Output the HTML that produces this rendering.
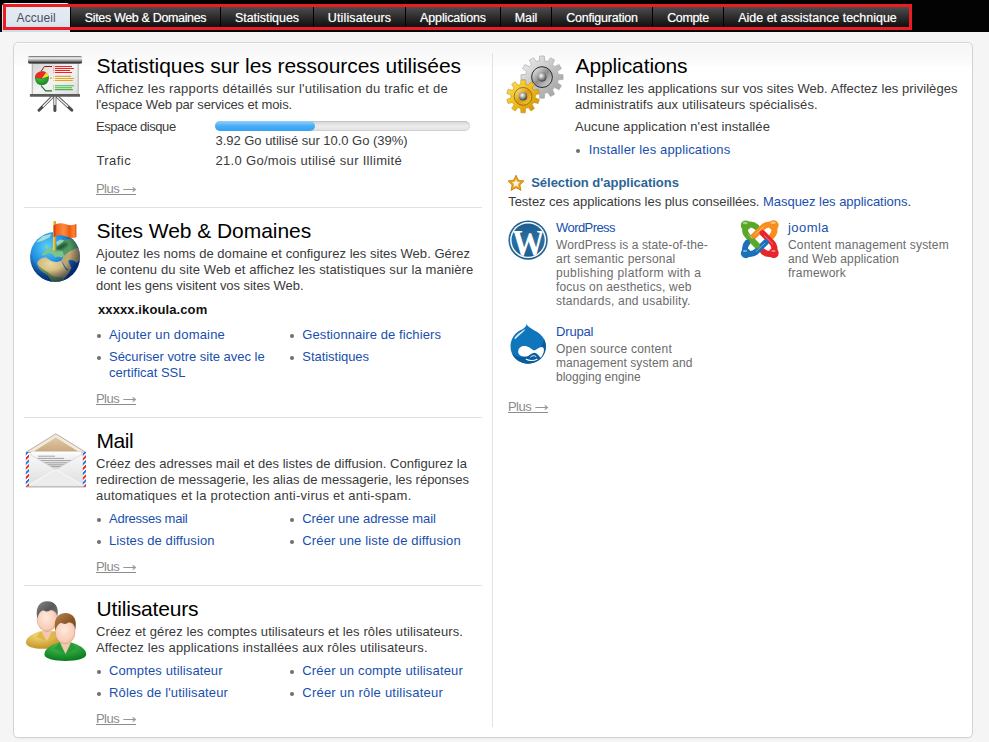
<!DOCTYPE html>
<html lang="fr">
<head>
<meta charset="utf-8">
<title>Accueil - Parallels Plesk Panel</title>
<style>
html,body{margin:0;padding:0}
body{position:relative;width:989px;height:742px;overflow:hidden;background:#f5f5f5;font-family:"Liberation Sans",sans-serif;color:#333}
#hdr{position:absolute;left:0;top:0;width:989px;height:32px;background:#030303}
a{text-decoration:none;color:inherit}
#nav{list-style:none;margin:0;padding:0}
#nav li{position:absolute;top:4px;height:26px;box-sizing:border-box;border-left:1px solid #000;background:linear-gradient(#555 0,#4a4a4a 4px,#2a2a2a 14px,#0c0c0c 24px);text-align:center;white-space:nowrap}
#nav li a{display:inline-block;font-size:12.5px;line-height:15px;margin-top:7.2px;color:#fff;text-shadow:0 0 1px rgba(255,255,255,.55)}
#nav li.on{top:3px;height:29px;border:0;border-radius:4px 4px 0 0;background:linear-gradient(#e6edf3,#dfe8ef 60%,#cddbe5)}
#nav li.on a{color:#4a4e66;text-shadow:none;font-size:12px;margin-top:8.4px}
#mark{position:absolute;left:3px;top:4px;width:903px;height:20px;border:3px solid #ed1c24}
#panel{position:absolute;left:13px;top:42px;width:958px;height:694px;border:1px solid #cfd5d9;border-radius:5px;background:linear-gradient(#fff 0,#fff 1px,#f6f6f6 1px,#fcfcfc 22px,#fff 24px);box-shadow:0 1px 1px rgba(0,0,0,.04)}
.hr{position:absolute;left:10px;width:458px;height:1px;background:#e0e3e5}
#vr{position:absolute;left:478px;top:10px;width:1px;height:674px;background:#e0e3e5}
#txt>span,#txt>a,#txt>h2,#txt>h3{position:absolute;margin:0;padding:0;white-space:nowrap;font-weight:normal}
.h{font-size:21px;line-height:24px;color:#000}
.p{font-size:13px;line-height:15px;color:#3a3a3a}
.p a{color:#184fae}
.b{font-size:13px;line-height:15px;color:#111;font-weight:bold !important}
.l{font-size:13px;line-height:15px;color:#184fae}
.m{font-size:13px;line-height:15px;letter-spacing:-.55px;color:#8c8c8c;text-decoration:none;width:40px;height:13px;border-bottom:1px solid #8c8c8c}
.m span{font-size:21.3px;line-height:0;margin-left:-3.05px;color:#969696;letter-spacing:0}
.s{font-size:13px;line-height:15px;color:#2b6596;font-weight:bold !important}
.d{font-size:12px;line-height:14px;color:#6b6b6b}
.dot{position:absolute;width:4px;height:4px;border-radius:2px;background:#6e6e6e}
.ic{position:absolute;overflow:visible}
#bar{position:absolute;left:215px;top:121px;width:255px;height:10px;border-radius:5px;background:linear-gradient(#d2d2d2,#ececec 50%,#e2e2e2);box-shadow:inset 0 0 0 1px rgba(0,0,0,.08)}
#bar i{position:absolute;left:0;top:0;width:99.5px;height:10px;border-radius:5px;background:linear-gradient(#93d3fa,#49aef4 50%,#34a1f1)}

</style>
</head>
<body>
<div id="hdr">
<ul id="nav">
<li class="on" style="left:2.4px;width:67.6px"><a href="#" style="letter-spacing:0.073px">Accueil</a></li>
<li style="left:70px;width:150px"><a href="#" style="letter-spacing:-0.340px">Sites Web &amp; Domaines</a></li>
<li style="left:220px;width:93px"><a href="#" style="letter-spacing:-0.044px">Statistiques</a></li>
<li style="left:313px;width:92px"><a href="#" style="letter-spacing:0.123px">Utilisateurs</a></li>
<li style="left:405px;width:95px"><a href="#" style="letter-spacing:-0.134px">Applications</a></li>
<li style="left:500px;width:51px"><a href="#" style="letter-spacing:-0.130px">Mail</a></li>
<li style="left:551px;width:101px"><a href="#" style="letter-spacing:-0.228px">Configuration</a></li>
<li style="left:652px;width:71px"><a href="#" style="letter-spacing:-0.347px">Compte</a></li>
<li style="left:723px;width:188px"><a href="#" style="letter-spacing:-0.023px">Aide et assistance technique</a></li>
</ul>
<div id="mark"></div>
</div>
<div id="panel">
<div class="hr" style="top:164px"></div><div class="hr" style="top:374px"></div><div class="hr" style="top:542px"></div><div id="vr"></div>
</div>
<div id="bar"><i></i></div>
<div id="dots"><i class="dot" style="left:97px;top:334px"></i><i class="dot" style="left:290px;top:334px"></i><i class="dot" style="left:97px;top:356px"></i><i class="dot" style="left:290px;top:356px"></i><i class="dot" style="left:97px;top:518px"></i><i class="dot" style="left:290px;top:518px"></i><i class="dot" style="left:97px;top:540px"></i><i class="dot" style="left:290px;top:540px"></i><i class="dot" style="left:97px;top:670px"></i><i class="dot" style="left:290px;top:670px"></i><i class="dot" style="left:97px;top:692px"></i><i class="dot" style="left:290px;top:692px"></i><i class="dot" style="left:576px;top:149px"></i></div>
<svg class="ic" style="left:20px;top:48px" width="75" height="70" viewBox="0 0 75 70">
<defs>
<linearGradient id="g1a" x1="0" y1="0" x2="0" y2="1"><stop offset="0" stop-color="#5a5a5a"/><stop offset=".25" stop-color="#fbfbfb"/><stop offset=".55" stop-color="#aaa"/><stop offset=".85" stop-color="#3a3a3a"/><stop offset="1" stop-color="#555"/></linearGradient>
<linearGradient id="g1b" x1="0" y1="0" x2="1" y2="1"><stop offset="0" stop-color="#d2d2d2"/><stop offset=".5" stop-color="#f4f4f4"/><stop offset="1" stop-color="#dedede"/></linearGradient>
<radialGradient id="g1c" cx=".4" cy=".3" r=".8"><stop offset="0" stop-color="#5fd24f"/><stop offset="1" stop-color="#0f7a1c"/></radialGradient>
<linearGradient id="g1d" x1="0" y1="0" x2="1" y2="0"><stop offset="0" stop-color="#555"/><stop offset=".5" stop-color="#eee"/><stop offset="1" stop-color="#555"/></linearGradient>
</defs>
<g stroke-linecap="round">
<path d="M32.6,48.6 L19,62.2" stroke="#4c4c4c" stroke-width="3"/><path d="M32.4,49 L23.2,58.2" stroke="#f2f2f2" stroke-width="1.5"/>
<path d="M37.2,48.6 L51.8,62.2" stroke="#4c4c4c" stroke-width="3"/><path d="M37.4,49 L47.6,58.2" stroke="#f2f2f2" stroke-width="1.5"/>
<path d="M34.9,48.6 L34.9,62.5" stroke="#4c4c4c" stroke-width="3"/><path d="M34.9,48.6 L34.9,56.5" stroke="#f2f2f2" stroke-width="1.5"/>
</g>
<rect x="12.2" y="15" width="46" height="31.4" fill="url(#g1b)" stroke="#a3a3a3" stroke-width=".9"/>
<rect x="9.9" y="46" width="50.1" height="2.8" rx=".6" fill="#5c5c5c"/>
<rect x="8" y="8" width="54.1" height="7.7" rx="1.6" fill="url(#g1a)"/>
<polyline points="21,23.4 24.4,18.5 32,18.5" fill="none" stroke="#8e1c1c" stroke-width="1"/>
<polyline points="21,37.6 25.6,42.9 32,42.9" fill="none" stroke="#1c6e33" stroke-width="1.1"/>
<rect x="30.2" y="29.4" width="1.5" height="1.5" fill="#d89a28"/>
<circle cx="21.9" cy="30.2" r="7" fill="url(#g1c)"/>
<path d="M21.9,30.6 L15,29.4 A7,6.2 0 0 1 26.2,24.6 Z" fill="#f0282a"/>
<path d="M21.9,30.6 L26.2,24.6 A7,7 0 0 1 28.7,28.6 Z" fill="#f6e02a"/>
<path d="M15,29.4 L21.9,30.8 L28.7,28.6" fill="none" stroke="#0c5a18" stroke-width=".5" opacity=".6"/>
<g stroke="#f61f1f" stroke-width="1.15"><path d="M34.9,18.5H52M34.9,20.5H53.9M34.9,22.5H50M34.9,24.5H52"/></g>
<g stroke="#e2a322" stroke-width="1.15"><path d="M34.9,28.4H51M34.9,30.5H53.9M34.9,32.5H52.8"/></g>
<g stroke="#41b845" stroke-width="1.15"><path d="M34.9,37.7H53.9M34.9,39.7H52M34.9,41.6H52.8"/></g>
<path d="M33.5,17.9V25.2" stroke="#f77" stroke-width=".8" stroke-dasharray="1.2,.9"/>
<path d="M33.5,27.8V33.1" stroke="#e8c070" stroke-width=".8" stroke-dasharray="1.2,.9"/>
<path d="M33.5,37.1V42.3" stroke="#8c8" stroke-width=".8" stroke-dasharray="1.2,.9"/>
</svg>
<svg class="ic" style="left:20px;top:212px" width="75" height="70" viewBox="0 0 75 70">
<defs>
<radialGradient id="g2a" cx=".34" cy=".3" r=".75"><stop offset="0" stop-color="#5cd0f8"/><stop offset=".4" stop-color="#2596e4"/><stop offset=".8" stop-color="#0f55b4"/><stop offset="1" stop-color="#0a3f98"/></radialGradient>
<radialGradient id="g2b" cx=".42" cy=".38" r=".62"><stop offset=".62" stop-color="#000" stop-opacity="0"/><stop offset="1" stop-color="#00164a" stop-opacity=".6"/></radialGradient>
<linearGradient id="g2c" x1="0" y1="0" x2="1" y2="0"><stop offset="0" stop-color="#c03408"/><stop offset=".12" stop-color="#f2601a"/><stop offset=".45" stop-color="#ff8c3c"/><stop offset=".7" stop-color="#ee5a12"/><stop offset=".9" stop-color="#ff8434"/><stop offset="1" stop-color="#d8440e"/></linearGradient>
<linearGradient id="g2d" x1="0" y1="0" x2="1" y2="0"><stop offset="0" stop-color="#f8dc70"/><stop offset="1" stop-color="#c8900c"/></linearGradient>
<radialGradient id="g2e" cx=".4" cy=".25" r=".8"><stop offset="0" stop-color="#ead9a0"/><stop offset=".6" stop-color="#c8b078"/><stop offset="1" stop-color="#a08c58"/></radialGradient>
<clipPath id="c2"><circle cx="35.05" cy="44.9" r="24.9"/></clipPath>
<filter id="f2" x="-10%" y="-10%" width="120%" height="120%"><feGaussianBlur stdDeviation=".35"/></filter>
<filter id="f2s" x="-30%" y="-60%" width="160%" height="220%"><feGaussianBlur stdDeviation=".9"/></filter>
</defs>
<circle cx="35.05" cy="44.9" r="24.9" fill="url(#g2a)"/>
<g clip-path="url(#c2)"><g filter="url(#f2)">
<path d="M16.32,30.38 L22.38,24.32 L31.27,21.73 L29.66,25.13 L23.19,28.52 Z" fill="#c4ecd8" opacity=".8"/>
<path d="M37.34,34.18 L44.21,28.36 L50.27,26.58 L55.53,29.57 L59.00,35.80 L53.50,37.25 L48.65,39.68 L43.64,44.12 L43.00,39.68 L37.34,37.09 Z" fill="#4f9a62"/>
<path d="M36.12,29.98 L40.57,27.39 L44.21,28.52 L40.57,32.24 L37.50,34.18 Z" fill="#9ad8b4"/>
<path d="M25.05,33.37 L26.99,32.89 L27.96,36.28 L25.86,36.61 Z" fill="#8ccc9a"/>
<path d="M21.57,41.94 L24.24,40.49 L26.18,37.66 L29.25,36.44 L32.08,35.64 L37.34,37.09 L43.00,39.68 L43.97,43.88 L41.54,45.50 L37.74,44.53 L35.07,45.50 L33.29,43.07 L31.03,41.46 L28.61,41.05 L25.37,43.07 L22.38,43.40 Z" fill="#7cc48c"/>
<path d="M41.38,48.41 L43.64,44.12 L48.65,39.68 L53.50,37.25 L57.55,35.64 L60.78,40.49 L60.78,46.95 L56.74,51.00 L53.50,48.57 L50.27,47.76 L48.25,48.97 L50.27,53.42 L51.48,56.25 L49.30,58.43 L45.82,55.85 L43.40,51.40 Z" fill="#bfa870"/>
<path d="M17.13,51.00 C17.93,48.17 22.38,45.34 25.61,45.34 C28.04,46.55 30.87,49.38 33.29,49.54 C35.72,50.35 38.95,49.78 41.38,48.41 L42.83,52.21 L44.77,56.01 L47.20,58.43 L50.43,57.30 C49.62,61.50 45.42,64.74 43.00,68.78 L37.34,70.56 L31.27,69.18 C30.06,65.55 27.64,62.72 25.21,61.34 C21.17,59.48 17.93,55.85 17.13,51.00 Z" fill="url(#g2e)"/>
<path d="M17.13,51.80 C18.34,55.85 21.57,59.48 25.61,61.50 C28.04,63.12 30.06,65.95 31.27,69.18 L37.34,70.56 L43.00,68.78 C43.80,67.16 43.00,65.55 40.57,64.74 C36.53,65.55 32.49,64.74 29.25,61.50 C25.21,58.27 20.36,56.65 17.13,51.80 Z" fill="#5e9a50" opacity=".85"/>
</g><ellipse cx="41.6" cy="34.6" rx="7.2" ry="2.3" fill="#17452a" opacity=".75" transform="rotate(-28 41.6 34.6)" filter="url(#f2s)"/></g>
<circle cx="35.05" cy="44.9" r="24.9" fill="url(#g2b)"/>
<rect x="33" y="9" width="2.9" height="29.4" rx=".6" fill="url(#g2d)"/>
<path d="M33.6,13.6 C37,10.6 42,10.8 46,12.2 C50,13.6 53,13.4 56.4,12 L56.4,25.2 C53,26.4 50,26.2 46,24.6 C42,23 37,22.6 33.6,25.6 Z" fill="url(#g2c)"/>
</svg>
<svg class="ic" style="left:20px;top:425px" width="75" height="70" viewBox="0 0 75 70">
<defs>
<linearGradient id="g3a" x1="0" y1="0" x2="0" y2="1"><stop offset="0" stop-color="#e0c8a6"/><stop offset="1" stop-color="#c9a87c"/></linearGradient>
<linearGradient id="g3b" x1="0" y1="0" x2="0" y2="1"><stop offset="0" stop-color="#fff"/><stop offset="1" stop-color="#cfcfcf"/></linearGradient>
<linearGradient id="g3c" x1="0" y1="0" x2="0" y2="1"><stop offset="0" stop-color="#fafafa"/><stop offset="1" stop-color="#dedede"/></linearGradient>
<pattern id="p3" width="4" height="9.6" patternUnits="userSpaceOnUse" patternTransform="skewY(-45)"><rect width="4" height="9.6" fill="#fff"/><rect width="4" height="2.6" fill="#e8261c"/><rect y="4.8" width="4" height="2.6" fill="#1a72e0"/></pattern>
</defs>
<path d="M5.8,27.4 L35.8,8.8 L66,27.4 Z" fill="#f2e9dc" stroke="#9c8f80" stroke-width=".7" stroke-linejoin="round"/>
<path d="M13,27 L35.8,12.6 L59,27 Z" fill="url(#g3a)"/>
<rect x="11" y="26.4" width="50.6" height="22" fill="url(#g3b)" stroke="#c8c8c8" stroke-width=".4"/>
<g stroke="#8a8a8a" stroke-width="1" opacity=".75"><path d="M18,31.2H35M17.5,33.4H44M19.5,35.6H52M21,37.8H50M24,39.8H46M28,41.6H42"/></g>
<path d="M5.8,27 L35.8,44.6 L66,27 L66,61.8 L5.8,61.8 Z" fill="url(#g3c)"/>
<path d="M5.8,61.8 L35.8,44.6 L66,61.8" fill="#ececec" stroke="#fff" stroke-width=".8"/>
<path d="M5.8,27 L35.8,44.6 L66,27" fill="none" stroke="#cfcfcf" stroke-width=".6"/>
<rect x="5.8" y="27" width="3.2" height="34.8" fill="url(#p3)"/>
<rect x="62.8" y="27" width="3.2" height="34.8" fill="url(#p3)"/>
<path d="M5.8,61.9H66" stroke="#8f8f8f" stroke-width=".8"/>
</svg>
<svg class="ic" style="left:20px;top:595px" width="75" height="70" viewBox="0 0 75 70">
<defs>
<radialGradient id="g4a" cx=".45" cy=".4" r=".7"><stop offset="0" stop-color="#ffe9de"/><stop offset=".7" stop-color="#f9cdb6"/><stop offset="1" stop-color="#e9a888"/></radialGradient>
<radialGradient id="g4b" cx=".4" cy=".25" r=".8"><stop offset="0" stop-color="#f6dc78"/><stop offset="1" stop-color="#c08e22"/></radialGradient>
<radialGradient id="g4c" cx=".45" cy=".2" r=".8"><stop offset="0" stop-color="#4cc458"/><stop offset="1" stop-color="#0a7a1e"/></radialGradient>
<linearGradient id="g4d" x1="0" y1="0" x2="1" y2="1"><stop offset="0" stop-color="#8a8a8a"/><stop offset=".5" stop-color="#5a5a5a"/><stop offset="1" stop-color="#777"/></linearGradient>
<linearGradient id="g4e" x1="0" y1="0" x2="1" y2="1"><stop offset="0" stop-color="#b98850"/><stop offset=".6" stop-color="#8a5426"/><stop offset="1" stop-color="#6e3e18"/></linearGradient>
</defs>
<path d="M6,47.5 C6,42 13,38.5 20,36.2 L34,36.2 C38,37.6 40,39 40,41 L40,50 C36,53 30,53.8 22.9,53.8 C13,53.8 6,51.5 6,47.5 Z" fill="url(#g4b)"/>
<path d="M22,36 L27,46 L32,36 Z" fill="#f4c8ae"/>
<path d="M16,42 L21,36.5 L26.5,46.5 L21,44 Z M38,42 L33,36.5 L27.5,46.5 L33,44 Z" fill="#e0b84a"/>
<ellipse cx="27" cy="24.6" rx="9.8" ry="11.8" fill="url(#g4a)" stroke="#c8927a" stroke-width=".5"/>
<path d="M17.4,23.5 C15,13 19,6.4 27,6.2 C35,6 39.6,12 37.2,22 C36.4,17.5 34,15 30,15.4 C27.6,17.4 25,16.2 23,15.2 C20,16.6 18.2,19 17.4,23.5 Z" fill="url(#g4d)"/>
<path d="M24.4,59.5 C24.4,53.5 32,50 39,47.6 L51.6,47.6 C58.6,50 66.2,53.5 66.2,59.5 C66.2,63.6 57,65.9 45.3,65.9 C33.6,65.9 24.4,63.6 24.4,59.5 Z" fill="url(#g4c)"/>
<path d="M40,47 L45.5,59 L51,47 Z" fill="#f4c8ae"/>
<path d="M34,53.5 L39.5,47.5 L45,59.5 L39,56 Z M57,53.5 L51.5,47.5 L46,59.5 L52,56 Z" fill="#2a9a36"/>
<ellipse cx="45.1" cy="37" rx="9.9" ry="11.8" fill="url(#g4a)" stroke="#c8927a" stroke-width=".5"/>
<path d="M35.4,36 C33,25.5 37,18.2 45,18 C53,17.8 57.8,24 55.2,35 C54.6,30 52.6,27.4 48.4,27.6 C46,29.8 43,28.8 41,27.8 C38,29 36.2,31.6 35.4,36 Z" fill="url(#g4e)"/>
</svg>
<svg class="ic" style="left:500px;top:45px" width="75" height="70" viewBox="0 0 75 70">
<defs>
<linearGradient id="g5a" x1="0" y1="0" x2="1" y2="1"><stop offset="0" stop-color="#f4f4f4"/><stop offset=".5" stop-color="#c4c4c4"/><stop offset="1" stop-color="#9a9a9a"/></linearGradient>
<linearGradient id="g5b" x1="0" y1="0" x2="1" y2="1"><stop offset="0" stop-color="#fbe45a"/><stop offset=".5" stop-color="#f0bc18"/><stop offset="1" stop-color="#c88a08"/></linearGradient>
<radialGradient id="g5c" cx=".4" cy=".35" r=".7"><stop offset="0" stop-color="#fff"/><stop offset=".5" stop-color="#999"/><stop offset="1" stop-color="#333"/></radialGradient>
<linearGradient id="g5d" x1="0" y1="0" x2="1" y2="1"><stop offset="0" stop-color="#fdfdfd"/><stop offset=".5" stop-color="#8c8c8c"/><stop offset="1" stop-color="#e8e8e8"/></linearGradient>
<linearGradient id="g5e" x1="0" y1="0" x2="1" y2="1"><stop offset="0" stop-color="#fff2a0"/><stop offset=".5" stop-color="#d89c10"/><stop offset="1" stop-color="#f6d040"/></linearGradient>
</defs>
<path d="M58.27,29.35 L63.07,29.77 L63.07,34.43 L58.27,34.85 L57.47,37.85 L61.41,40.62 L59.09,44.65 L54.71,42.62 L52.52,44.81 L54.55,49.19 L50.52,51.51 L47.75,47.57 L44.75,48.37 L44.33,53.17 L39.67,53.17 L39.25,48.37 L36.25,47.57 L33.48,51.51 L29.45,49.19 L31.48,44.81 L29.29,42.62 L24.91,44.65 L22.59,40.62 L26.53,37.85 L25.73,34.85 L20.93,34.43 L20.93,29.77 L25.73,29.35 L26.53,26.35 L22.59,23.58 L24.91,19.55 L29.29,21.58 L31.48,19.39 L29.45,15.01 L33.48,12.69 L36.25,16.63 L39.25,15.83 L39.67,11.03 L44.33,11.03 L44.75,15.83 L47.75,16.63 L50.52,12.69 L54.55,15.01 L52.52,19.39 L54.71,21.58 L59.09,19.55 L61.41,23.58 L57.47,26.35Z" fill="url(#g5a)" stroke="#a2a2a2" stroke-width=".6" stroke-linejoin="round"/>
<circle cx="42" cy="32.1" r="10.4" fill="url(#g5d)" stroke="#2a2a2a" stroke-width="1"/>
<circle cx="42" cy="32.1" r="4.6" fill="url(#g5c)"/>
<path d="M33.80,45.34 L38.08,44.24 L39.43,48.39 L35.32,50.01 L35.32,52.79 L39.43,54.41 L38.08,58.56 L33.80,57.46 L32.17,59.71 L34.54,63.43 L31.01,66.00 L28.20,62.59 L25.56,63.45 L25.28,67.86 L20.92,67.86 L20.64,63.45 L18.00,62.59 L15.19,66.00 L11.66,63.43 L14.03,59.71 L12.40,57.46 L8.12,58.56 L6.77,54.41 L10.88,52.79 L10.88,50.01 L6.77,48.39 L8.12,44.24 L12.40,45.34 L14.03,43.09 L11.66,39.37 L15.19,36.80 L18.00,40.21 L20.64,39.35 L20.92,34.94 L25.28,34.94 L25.56,39.35 L28.20,40.21 L31.01,36.80 L34.54,39.37 L32.17,43.09Z" fill="url(#g5b)" stroke="#b88408" stroke-width=".5" stroke-linejoin="round"/>
<circle cx="23.1" cy="51.4" r="8.9" fill="url(#g5e)" stroke="#8a5a08" stroke-width=".8"/>
<circle cx="23.1" cy="51.4" r="4.1" fill="url(#g5c)"/>
</svg>
<svg class="ic" style="left:507px;top:174px" width="18" height="18" viewBox="0 0 18 18"><polygon points="9.00,1.20 11.41,6.28 16.99,7.00 12.90,10.87 13.94,16.40 9.00,13.70 4.06,16.40 5.10,10.87 1.01,7.00 6.59,6.28" fill="#eaa21a" stroke="#c27c08" stroke-width=".8" stroke-linejoin="round"/><polygon points="9.00,5.60 10.12,7.96 12.71,8.29 10.81,10.09 11.29,12.66 9.00,11.40 6.71,12.66 7.19,10.09 5.29,8.29 7.88,7.96" fill="#f4f4f4" stroke="#fbe2a8" stroke-width=".6"/></svg>
<svg class="ic" style="left:508px;top:219px" width="42" height="42" viewBox="0 0 42 42">
<defs><linearGradient id="g7" x1="0" y1="0" x2="0" y2="1"><stop offset="0" stop-color="#1d5c8e"/><stop offset=".5" stop-color="#2a6fa3"/><stop offset="1" stop-color="#1e5d8f"/></linearGradient>
<clipPath id="c7"><circle cx="20.1" cy="21.1" r="16.6"/></clipPath></defs>
<circle cx="20.1" cy="21.1" r="19.7" fill="url(#g7)"/>
<circle cx="20.1" cy="21.1" r="18" fill="#fff"/>
<circle cx="20.1" cy="21.1" r="16.6" fill="url(#g7)"/>
<g clip-path="url(#c7)"><text x="20.3" y="37.1" text-anchor="middle" font-family="'Liberation Serif',serif" font-size="38.6" font-weight="bold" fill="#fff" textLength="32.5" lengthAdjust="spacingAndGlyphs">W</text></g>
</svg>
<svg class="ic" style="left:730px;top:210px" width="60" height="60" viewBox="0 0 60 60">
<g fill="none" stroke-width="6" stroke-linecap="round" stroke-linejoin="round"><path d="M15.80,15.40 C19.60,13.90 23.60,14.50 26.40,17.00" stroke="#5aa72a"/><path d="M15.80,15.40 C14.40,19.60 14.90,23.20 17.70,26.00 L26.90,35.40" stroke="#5aa72a"/><path d="M43.60,15.30 C45.10,19.10 44.50,23.10 42.00,25.90" stroke="#f78f1e"/><path d="M43.60,15.30 C39.40,13.90 35.80,14.40 33.00,17.20 L23.60,26.40" stroke="#f78f1e"/><path d="M43.70,43.10 C39.90,44.60 35.90,44.00 33.10,41.50" stroke="#e8252a"/><path d="M43.70,43.10 C45.10,38.90 44.60,35.30 41.80,32.50 L32.60,23.10" stroke="#e8252a"/><path d="M15.90,43.20 C14.40,39.40 15.00,35.40 17.50,32.60" stroke="#1b70b8"/><path d="M15.90,43.20 C20.10,44.60 23.70,44.10 26.50,41.30 L35.90,32.10" stroke="#1b70b8"/><path d="M22.5,30.9 L26.9,35.4" stroke="#5aa72a"/></g>
<circle cx="15.80" cy="15.40" r="5" fill="#5aa72a"/><circle cx="43.60" cy="15.30" r="5" fill="#f78f1e"/><circle cx="43.70" cy="43.10" r="5" fill="#e8252a"/><circle cx="15.90" cy="43.20" r="5" fill="#1b70b8"/><g fill="#fff" opacity=".45"><ellipse cx="15.2" cy="13" rx="2.6" ry="1.3"/><ellipse cx="43.2" cy="12.8" rx="2.6" ry="1.3"/><ellipse cx="15" cy="41" rx="2.2" ry="1"/><ellipse cx="43.4" cy="41" rx="2.2" ry="1"/></g>
<g fill="none" stroke="#fff" stroke-width=".7" opacity=".6" stroke-linecap="round"><path d="M33.5,16.8 L25,24.6"/><path d="M42.6,34 L34.4,25.8"/><path d="M26,41.6 L34.6,33.4"/><path d="M18.4,24.6 L22.5,28.8"/></g>
</svg>
<svg class="ic" style="left:500px;top:315px" width="60" height="60" viewBox="0 0 60 60">
<path d="M26.68,8.89 C27.89,12.13 32.34,13.74 36.38,16.57 C42.85,20.61 45.92,25.87 45.92,31.53 C45.92,41.23 38.00,48.67 28.13,48.67 C18.27,48.67 10.51,41.23 10.51,31.53 C10.51,24.25 14.55,18.59 20.21,15.36 C23.44,13.58 26.03,12.13 26.68,8.89 Z" fill="#0f76bc"/>
<path d="M45.92,31.53 C45.92,41.23 38.00,48.67 28.13,48.67 C21.02,48.67 14.96,44.87 12.13,38.80 C16.17,42.04 23.44,43.65 29.10,40.42 C35.57,36.78 42.04,33.95 44.06,24.25 C45.27,26.68 45.92,29.10 45.92,31.53 Z" fill="#0a5c9c"/>
<path d="M18.19,36.78 C18.19,33.14 21.18,31.12 24.66,31.12 C28.29,31.12 30.72,33.95 33.95,35.57 C36.78,34.60 38.80,31.93 41.63,31.93 C44.06,31.93 44.30,34.76 43.65,37.19 C42.85,39.61 41.63,42.04 40.42,42.85 C38.80,40.42 36.78,38.00 34.36,37.83 C31.93,38.00 29.91,40.02 27.49,41.23 C24.25,42.04 18.19,41.23 18.19,36.78 Z" fill="#fff"/>
<path d="M26.27,44.30 C29.10,45.92 33.95,45.76 37.03,44.14" fill="none" stroke="#fff" stroke-width="1.1" stroke-linecap="round"/>
<path d="M30.56,42.04 C31.93,40.26 34.76,40.26 35.97,41.39" fill="none" stroke="#fff" stroke-width=".9" stroke-linecap="round"/>
<path d="M14.39,23.44 C16.17,19.40 21.02,16.98 25.46,13.74 C24.25,17.38 18.59,20.21 15.36,24.25 Z" fill="#fff" opacity=".85"/>
</svg>
<div id="txt">
<h2 class="h" style="left:96.5px;top:54.0px;letter-spacing:-0.049px">Statistiques sur les ressources utilisées</h2>
<span class="p" style="left:96.0px;top:81.0px;letter-spacing:0.245px">Affichez les rapports détaillés sur l'utilisation du trafic et de</span>
<span class="p" style="left:96.0px;top:97.0px;letter-spacing:-0.124px">l'espace Web par services et mois.</span>
<span class="p" style="left:96.0px;top:119.0px;letter-spacing:-0.429px">Espace disque</span>
<span class="p" style="left:215.5px;top:133.0px;letter-spacing:-0.028px">3.92 Go utilisé sur 10.0 Go (39%)</span>
<span class="p" style="left:96.4px;top:153.0px;letter-spacing:0.445px">Trafic</span>
<span class="p" style="left:215.5px;top:153.0px;letter-spacing:0.310px">21.0 Go/mois utilisé sur Illimité</span>
<a href="#" class="m" style="left:96.0px;top:181.0px">Plus <span>→</span></a>
<h2 class="h" style="left:96.5px;top:219.0px;letter-spacing:-0.042px">Sites Web &amp; Domaines</h2>
<span class="p" style="left:96.0px;top:246.0px;letter-spacing:0.034px">Ajoutez les noms de domaine et configurez les sites Web. Gérez</span>
<span class="p" style="left:96.0px;top:262.0px;letter-spacing:0.120px">le contenu du site Web et affichez les statistiques sur la manière</span>
<span class="p" style="left:96.0px;top:278.0px;letter-spacing:-0.049px">dont les gens visitent vos sites Web.</span>
<span class="b" style="left:98.0px;top:302.0px;letter-spacing:0.102px">xxxxx.ikoula.com</span>
<a href="#" class="l" style="left:109.0px;top:327.0px;letter-spacing:0.181px">Ajouter un domaine</a>
<a href="#" class="l" style="left:302.3px;top:327.0px;letter-spacing:0.088px">Gestionnaire de fichiers</a>
<a href="#" class="l" style="left:109.0px;top:349.0px;letter-spacing:-0.014px">Sécuriser votre site avec le</a>
<a href="#" class="l" style="left:109.0px;top:365.0px;letter-spacing:-0.007px">certificat SSL</a>
<a href="#" class="l" style="left:302.3px;top:349.0px;letter-spacing:-0.042px">Statistiques</a>
<a href="#" class="m" style="left:96.0px;top:391.0px">Plus <span>→</span></a>
<h2 class="h" style="left:96.5px;top:429.0px;letter-spacing:-0.429px">Mail</h2>
<span class="p" style="left:96.0px;top:456.0px;letter-spacing:0.031px">Créez des adresses mail et des listes de diffusion. Configurez la</span>
<span class="p" style="left:96.0px;top:472.0px;letter-spacing:-0.009px">redirection de messagerie, les alias de messagerie, les réponses</span>
<span class="p" style="left:96.0px;top:488.0px;letter-spacing:0.249px">automatiques et la protection anti-virus et anti-spam.</span>
<a href="#" class="l" style="left:109.0px;top:511.0px;letter-spacing:-0.242px">Adresses mail</a>
<a href="#" class="l" style="left:302.3px;top:511.0px;letter-spacing:-0.074px">Créer une adresse mail</a>
<a href="#" class="l" style="left:109.0px;top:533.0px;letter-spacing:0.092px">Listes de diffusion</a>
<a href="#" class="l" style="left:302.3px;top:533.0px;letter-spacing:0.149px">Créer une liste de diffusion</a>
<a href="#" class="m" style="left:96.0px;top:559.0px">Plus <span>→</span></a>
<h2 class="h" style="left:96.5px;top:597.0px;letter-spacing:-0.165px">Utilisateurs</h2>
<span class="p" style="left:96.0px;top:624.0px;letter-spacing:0.109px">Créez et gérez les comptes utilisateurs et les rôles utilisateurs.</span>
<span class="p" style="left:96.0px;top:640.0px;letter-spacing:0.149px">Affectez les applications installées aux rôles utilisateurs.</span>
<a href="#" class="l" style="left:109.0px;top:663.0px;letter-spacing:0.127px">Comptes utilisateur</a>
<a href="#" class="l" style="left:302.3px;top:663.0px;letter-spacing:0.171px">Créer un compte utilisateur</a>
<a href="#" class="l" style="left:109.0px;top:685.0px;letter-spacing:0.139px">Rôles de l'utilisateur</a>
<a href="#" class="l" style="left:302.3px;top:685.0px;letter-spacing:0.223px">Créer un rôle utilisateur</a>
<a href="#" class="m" style="left:96.0px;top:711.0px">Plus <span>→</span></a>
<h2 class="h" style="left:575.5px;top:54.0px;letter-spacing:-0.103px">Applications</h2>
<span class="p" style="left:575.5px;top:81.0px;letter-spacing:0.056px">Installez les applications sur vos sites Web. Affectez les privilèges</span>
<span class="p" style="left:575.0px;top:97.0px;letter-spacing:0.115px">administratifs aux utilisateurs spécialisés.</span>
<span class="p" style="left:575.0px;top:119.0px;letter-spacing:0.093px">Aucune application n'est installée</span>
<a href="#" class="l" style="left:588.7px;top:142.0px;letter-spacing:0.141px">Installer les applications</a>
<h3 class="s" style="left:531.2px;top:175.0px;letter-spacing:-0.025px">Sélection d'applications</h3>
<span class="p" style="left:508.2px;top:194.0px;letter-spacing:-0.037px">Testez ces applications les plus conseillées. <a href="#">Masquez les applications</a>.</span>
<a href="#" class="l" style="left:556.0px;top:220.0px;letter-spacing:-0.562px">WordPress</a>
<span class="d" style="left:556.0px;top:238.0px;letter-spacing:0.094px">WordPress is a state-of-the-</span>
<span class="d" style="left:556.0px;top:252.0px;letter-spacing:0.227px">art semantic personal</span>
<span class="d" style="left:556.0px;top:266.0px;letter-spacing:0.381px">publishing platform with a</span>
<span class="d" style="left:556.0px;top:280.0px;letter-spacing:0.174px">focus on aesthetics, web</span>
<span class="d" style="left:556.0px;top:294.0px;letter-spacing:0.243px">standards, and usability.</span>
<a href="#" class="l" style="left:788.0px;top:220.0px;letter-spacing:0.451px">joomla</a>
<span class="d" style="left:788.0px;top:238.0px;letter-spacing:0.162px">Content management system</span>
<span class="d" style="left:788.0px;top:252.0px;letter-spacing:0.140px">and Web application</span>
<span class="d" style="left:788.0px;top:266.0px;letter-spacing:0.220px">framework</span>
<a href="#" class="l" style="left:556.0px;top:324.0px;letter-spacing:-0.166px">Drupal</a>
<span class="d" style="left:556.0px;top:342.0px;letter-spacing:0.242px">Open source content</span>
<span class="d" style="left:556.0px;top:356.0px;letter-spacing:0.083px">management system and</span>
<span class="d" style="left:556.0px;top:370.0px;letter-spacing:-0.010px">blogging engine</span>
<a href="#" class="m" style="left:508.0px;top:399.0px">Plus <span>→</span></a>
</div>
</body>
</html>
